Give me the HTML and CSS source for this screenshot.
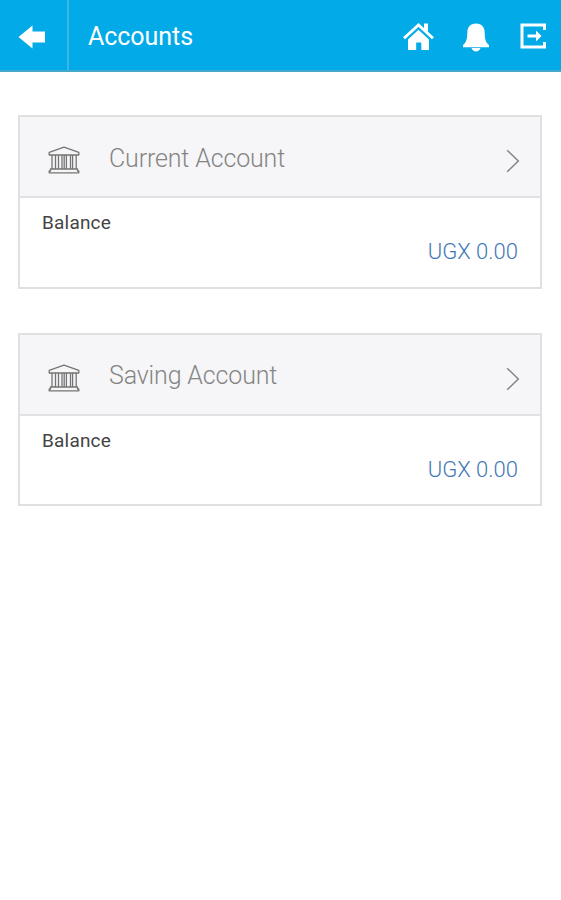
FILE: index.html
```html
<!DOCTYPE html>
<html lang="en">
<head>
<meta charset="utf-8">
<title>Accounts</title>
<link rel="stylesheet" href="styles.css">
</head>
<body>
<svg class="symbols" aria-hidden="true">
  <symbol id="bank" viewBox="0 0 32 28">
    <g fill="none" stroke="currentColor" stroke-width="1.3" stroke-linejoin="round">
      <path d="M1.200 6.300 16 1.200 30.800 6.300V9H1.200Z"/>
      <path d="M4 9v14M7.500 9v14M10.500 9v14M14 9v14M16.200 9v14M18.400 9v14M22.500 9v14M24.600 9v14M28.200 9v14"/>
      <path d="M2.500 23h27v2h1.300v1.800H1.200V25h1.300Z"/>
    </g>
  </symbol>
  <symbol id="chevron" viewBox="0 0 14 24">
    <path d="M1.200 1.200 12.300 12 1.200 22.800" fill="none" stroke="currentColor" stroke-width="1.500"/>
  </symbol>
</svg>
<header class="bar">
  <a class="back" aria-label="Back">
    <svg width="27" height="24" viewBox="0 0 27 24"><path d="M0.500 12 14.500 0.500V6.500H27V17.500H14.500V23.500Z" fill="#fff"/></svg>
  </a>
  <h1 class="title">Accounts</h1>
  <nav class="actions">
    <svg width="31" height="28" viewBox="0 0 31 28"><path d="M15.500 6.800 26 16.500V27H18.300V19.500H13.200V27H5V16.500Z" fill="#fff"/><path d="M1 15.300 15.500 2 30 15.300" fill="none" stroke="#fff" stroke-width="2.900"/><path d="M21 .5h4v9.500l-4-3.700Z" fill="#fff"/></svg>
    <svg width="28" height="29" viewBox="0 0 28 29"><path d="M14 .5C8 .5 5.300 4.500 5.300 9.500 5.300 16 4.200 19.500 1 22v2.200h26V22c-3.200-2.500-4.300-6-4.300-12.500C22.700 4.500 20 .5 14 .5Z" fill="#fff"/><path d="M9.500 25h9c-.7 2.300-2.300 3.500-4.500 3.500S10.200 27.300 9.500 25Z" fill="#fff"/></svg>
    <svg width="26" height="26" viewBox="0 0 26 26"><path d="M24.500 7V2H2V24H24.500V19" fill="none" stroke="#fff" stroke-width="3"/><path d="M7.500 11.500H16V7.500L21.500 13 16 18.500V14.500H7.500Z" fill="#fff"/></svg>
  </nav>
</header>
<main class="accounts">
  <section class="card">
    <div class="head">
      <svg class="bank"><use href="#bank"/></svg>
      <h2 class="name">Current Account</h2>
      <svg class="chevron"><use href="#chevron"/></svg>
    </div>
    <div class="body">
      <div class="label">Balance</div>
      <div class="amount">UGX 0.00</div>
    </div>
  </section>
  <section class="card second">
    <div class="head">
      <svg class="bank"><use href="#bank"/></svg>
      <h2 class="name">Saving Account</h2>
      <svg class="chevron"><use href="#chevron"/></svg>
    </div>
    <div class="body">
      <div class="label">Balance</div>
      <div class="amount">UGX 0.00</div>
    </div>
  </section>
</main>
</body>
</html>
```
FILE: styles.css
```css
* { box-sizing: border-box; }
body { margin: 0; background: #fff; font-family: Roboto, sans-serif; }
svg { display: block; flex: none; }
.symbols { position: absolute; width: 0; height: 0; }
.bar { display: flex; height: 72px; background: #02abe8; border-bottom: 2px solid #45a9cc; color: #fff; }
.back { width: 69px; padding: 25px 0 0 18px; border-right: 2px solid #38b5e0; }
.title { margin: 0; padding: 21px 0 0 19px; font-size: 25px; line-height: 32px; font-weight: 400; letter-spacing: -.05px; }
.actions { display: flex; align-items: flex-start; gap: 29px; margin-left: auto; padding: 23px 15px 0 0; }
.actions svg:nth-child(2) { margin: 0 1px 0 -1px; }
.accounts { display: flex; flex-direction: column; gap: 44px; padding: 43px 19px 0 18px; }
.card { height: 174px; border: 2px solid #e0e0e1; }
.second { height: 173px; }
.head { display: flex; height: 81px; padding: 0 20px 0 28px; background: #f6f6f8; border-bottom: 2px solid #e1e2e4; color: #858585; }
.bank { width: 32px; height: 28px; margin-top: 29px; color: #747474; }
.chevron { width: 14px; height: 24px; margin: 32px 0 0 auto; }
.name { margin: 26px 0 0 29px; font-size: 25px; line-height: 32px; font-weight: 300; letter-spacing: -.15px; }
.second .name { margin-top: 25px; }
.body { padding: 13px 22px 0 22px; }
.label { font-size: 19px; line-height: 24px; color: #444; letter-spacing: .2px; }
.amount { margin-top: 2px; font-size: 22px; line-height: 30px; font-weight: 300; color: #4378b5; text-align: right; }
```
